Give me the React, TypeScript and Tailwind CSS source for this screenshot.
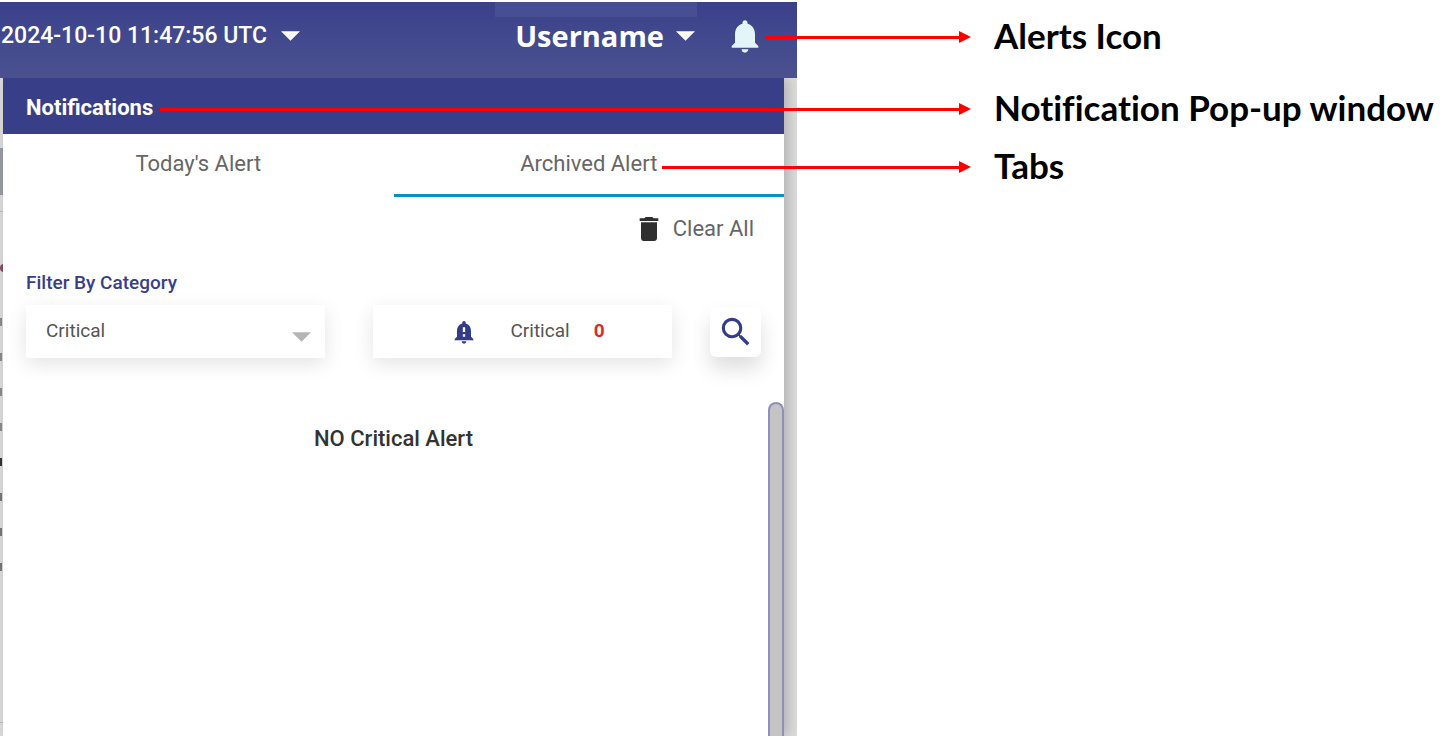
import React, { useState } from "react"

import { MdDelete, MdNotificationImportant, MdNotifications, MdSearch } from "react-icons/md";

type CalloutProps = {
  text: string;
  arrowClass: string;
  className: string;
}

const tabs = ["Today's Alert", "Archived Alert"];
const edgeRows = [
  "bg-[#8a8a8a]",
  "bg-[#8a8a8a]",
  "bg-[#8a8a8a]",
  "bg-[#8a8a8a]",
  "bg-[#333]",
  "bg-[#777]",
  "bg-[#777]",
  "bg-[#777]",
];

const CaretDown = ({ className }: { className: string }) => (
  <svg viewBox="0 0 20 10" className={className} aria-hidden="true">
    <path d="M0 0h20L10 10z" fill="currentColor" />
  </svg>
);

const Callout = ({ text, arrowClass, className }: CalloutProps) => (
  <li className={`relative flex items-center pl-[197px] ${className}`}>
    <span className={`absolute right-[calc(100%-174px)] flex items-center ${arrowClass}`}>
      <span className="h-[3px] flex-1 bg-[#ff0000]" />
      <svg viewBox="0 0 12 12" className="h-3 w-3 text-[#ff0000]" aria-hidden="true">
        <path d="M0 0l12 6-12 6z" fill="currentColor" />
      </svg>
    </span>
    <span className="pb-1">{text}</span>
  </li>
);

// Slice of the dimmed page that stays visible left of the popup
const PageEdge = () => (
  <div className="flex w-[3px] shrink-0 flex-col overflow-hidden bg-[#dcdcdc] pt-[70px]" aria-hidden="true">
    <div className="h-[47px] shrink-0 bg-[#9a9ca5]" />
    <div className="mt-4 h-px shrink-0 bg-[#bdbdbd]" />
    <div className="mt-[52px] h-2 w-4 shrink-0 rounded-full bg-[#8a4a5c]" />
    <div className="mt-[46px] flex flex-col gap-[27px]">
      {edgeRows.map((color, index) => (
        <div key={index} className={`h-2 w-0.5 ${color}`} />
      ))}
    </div>
    <div className="mt-[151px] h-px shrink-0 bg-[#bdbdbd]" />
  </div>
);

const NotificationPopup = () => {
  const [activeTab, setActiveTab] = useState<string>("Archived Alert");
  const [category, setCategory] = useState<string>("Critical");

  return (
    <section className="flex flex-1 flex-col bg-white shadow-[4px_0_12px_rgba(0,0,0,0.2)]">
      <h2 className="flex h-[56px] items-center bg-[#383f88] pt-0.5 pl-[23px] text-[22px] font-bold text-white">
        Notifications
      </h2>

      {/* Tabs */}
      <div className="grid grid-cols-2" role="tablist">
        {tabs.map((tab) => (
          <button
            key={tab}
            role="tab"
            aria-selected={activeTab === tab}
            className={`h-[63px] border-b-3 pb-0.5 text-[22px] text-[#666] ${activeTab === tab ? "border-[#0a8fc0]" : "border-transparent"}`}
            onClick={() => setActiveTab(tab)}
          >
            {tab}
          </button>
        ))}
      </div>

      {/* Clear All Button */}
      <div className="flex justify-end pt-4 pr-[30px]">
        <button className="flex items-center gap-2 text-[22px] leading-8 text-[#666]">
          <MdDelete className="h-8 w-8 text-[#2f2f2f]" />
          Clear All
        </button>
      </div>

      {/* Filters */}
      <div className="px-[23px] pt-[26px]">
        <label htmlFor="category" className="block text-[19px] leading-6 font-medium text-[#383f88]">
          Filter By Category
        </label>
        <div className="mt-[10px] flex items-center">
          <div className="relative w-[299px]">
            <select
              id="category"
              value={category}
              onChange={(e) => setCategory(e.target.value)}
              className="h-[53px] w-full appearance-none bg-white pl-5 text-[19px] text-[#555] shadow-[0_6px_20px_rgba(0,0,0,0.11)]"
            >
              <option>Critical</option>
            </select>
            <CaretDown className="pointer-events-none absolute right-[14px] bottom-4 h-[10px] w-[19px] text-[#b5b5b5]" />
          </div>
          <div className="ml-12 flex h-[53px] w-[299px] items-center justify-center bg-white pl-[10px] text-[19px] text-[#555] shadow-[0_6px_20px_rgba(0,0,0,0.11)]">
            <MdNotificationImportant className="mr-8 h-7 w-7 text-[#333b8a]" />
            Critical
            <span className="ml-6 font-bold text-[#d32f2f]">0</span>
          </div>
          <button
            aria-label="Search"
            className="ml-auto flex h-[50px] w-[51px] items-center justify-center rounded-md bg-white shadow-[0_12px_20px_rgba(0,0,0,0.13)]"
          >
            <MdSearch className="h-[38px] w-[38px] text-[#333b8a]" />
          </button>
        </div>
      </div>

      {/* Alert list */}
      <div className="mt-11 flex flex-1">
        <p className="flex-1 pt-5 pl-4 text-center text-[22px] font-medium text-[#333]">
          NO {category} Alert
        </p>
        <div className="w-4 rounded-t-full border-2 border-b-0 border-[#8b90bd] bg-[#c4c4c4]" />
      </div>
    </section>
  );
}

const App = () => {
  return (
    <div className="grid min-h-screen grid-cols-[797fr_657fr] overflow-hidden bg-white font-['Roboto',sans-serif]">
      <main className="flex min-w-0 flex-col overflow-hidden pt-0.5">
        <header className="relative flex h-[76px] items-center justify-between bg-linear-to-b from-[#3a418b] to-[#4b518f] pr-8 pb-2 text-white">
          <button className="flex items-center gap-[14px] pl-px text-[23px] font-medium">
            2024-10-10 11:47:56 UTC
            <CaretDown className="h-[10px] w-[19px]" />
          </button>
          <span className="absolute top-0 right-[100px] h-[15px] w-[202px] bg-[#484e92]" />
          <div className="flex items-center">
            <button className="flex items-center gap-3 font-['Open_Sans',sans-serif] text-[29px] font-bold">
              Username
              <CaretDown className="h-[10px] w-[19px]" />
            </button>
            <button aria-label="Alerts" className="ml-[30px]">
              <MdNotifications className="h-10 w-10 text-[#e3f5f9]" />
            </button>
          </div>
        </header>
        <div className="flex flex-1 bg-[#dcdcdc] pr-[13px]">
          <PageEdge />
          <NotificationPopup />
        </div>
      </main>

      <ul className="relative z-20 flex flex-col font-['Lato',sans-serif] text-[35px] font-bold whitespace-nowrap text-black [font-variant-ligatures:none]">
        <Callout text="Alerts Icon" className="h-[74px]" arrowClass="w-[206px]" />
        <Callout text="Notification Pop-up window" className="h-[70px]" arrowClass="w-[811px]" />
        <Callout text="Tabs" className="h-[46px]" arrowClass="w-[309px]" />
      </ul>
    </div>
  )
}

export default App;
